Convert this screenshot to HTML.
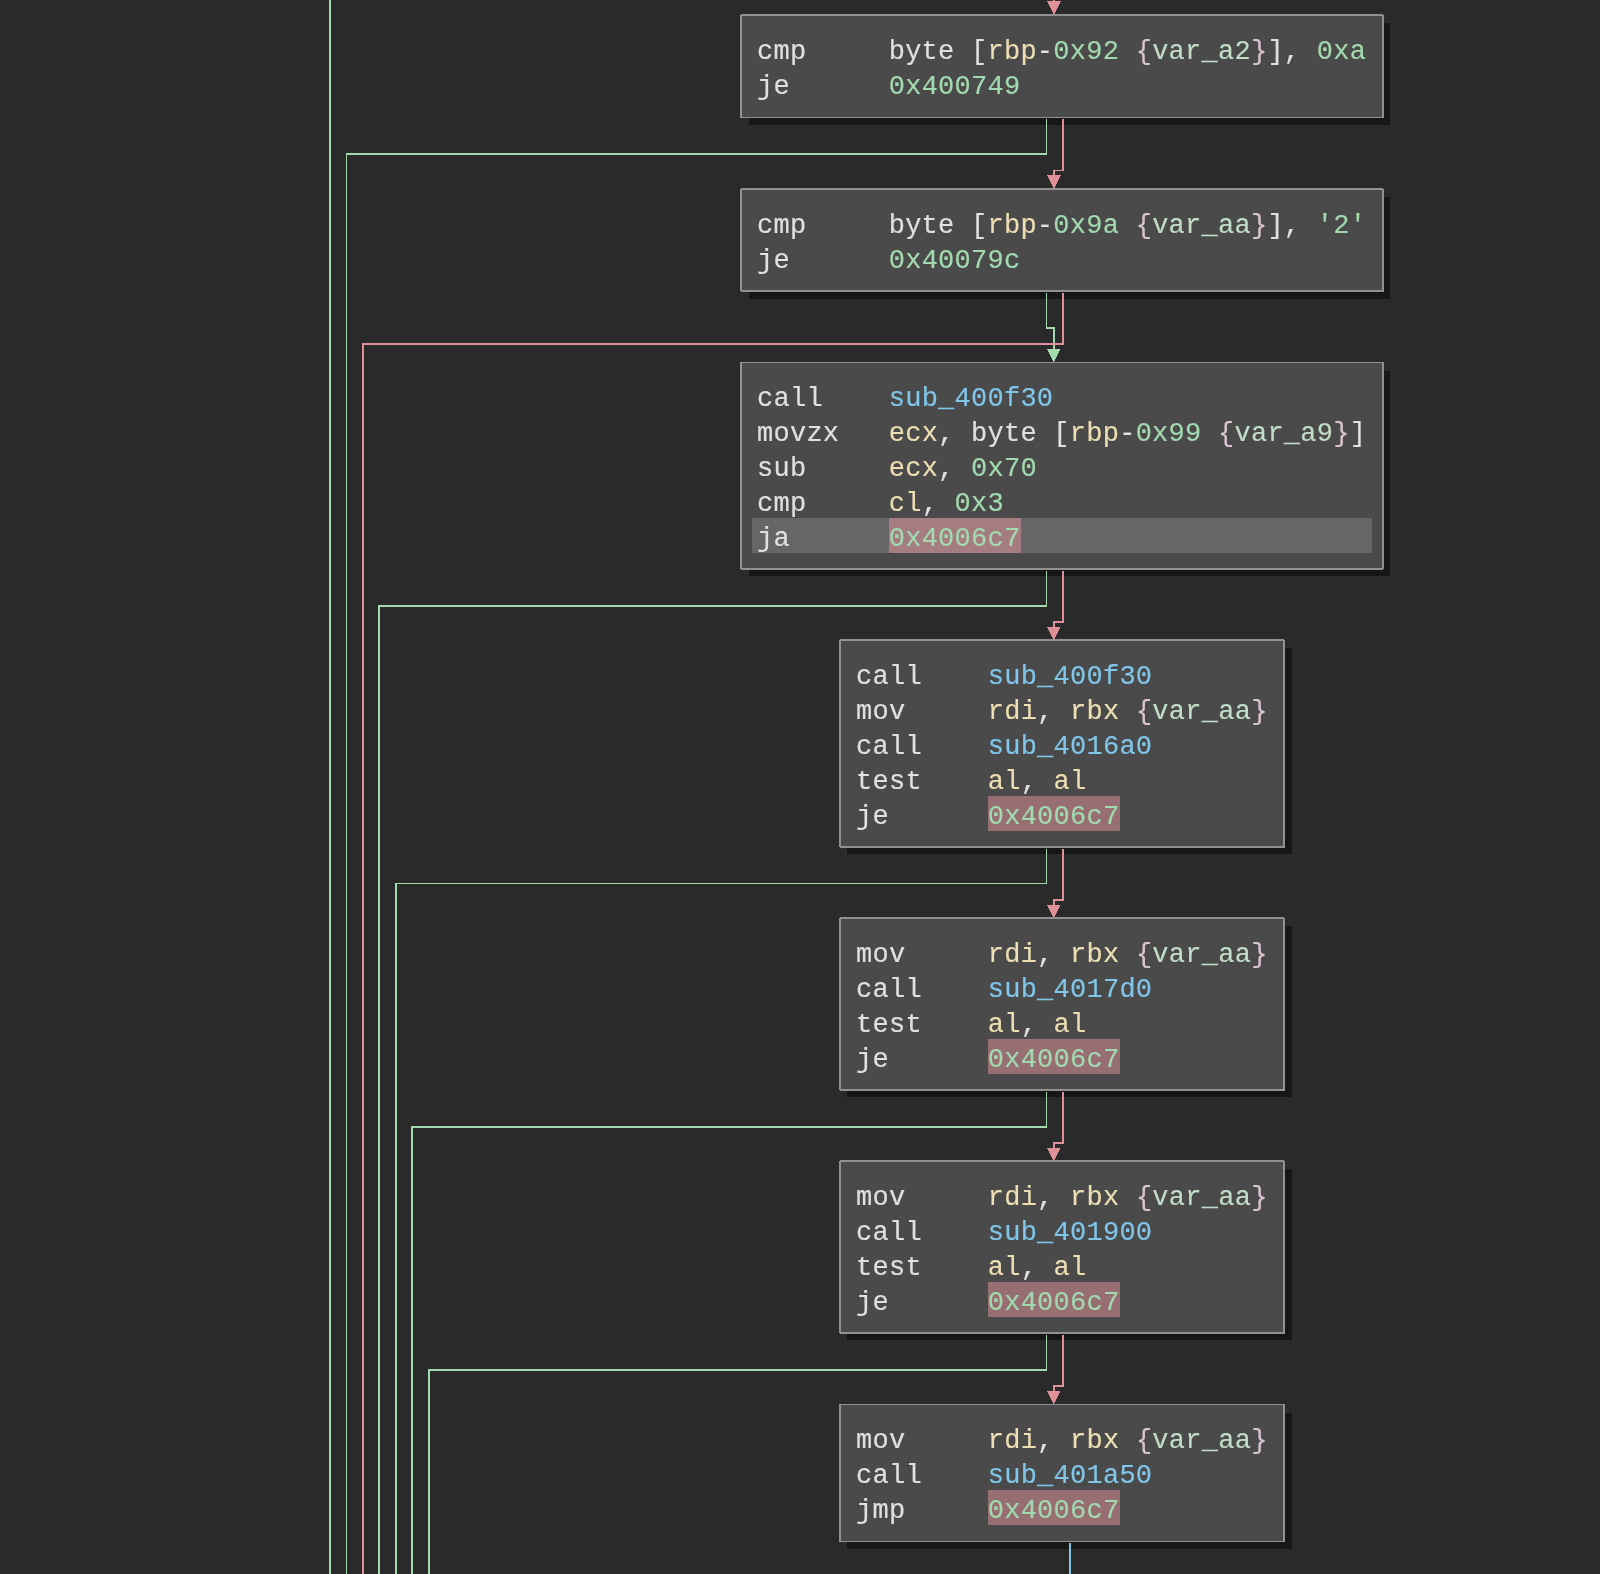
<!DOCTYPE html>
<html><head><meta charset="utf-8"><style>
html,body{margin:0;padding:0;background:#2a2a2a;width:1600px;height:1574px;overflow:hidden}
body{position:relative}
i{position:absolute;display:block}
.r{position:absolute;white-space:pre;font-family:"Liberation Mono",monospace;font-size:27px;line-height:35px;height:35px;color:#e0e0e0;will-change:transform;-webkit-text-stroke:0.15px currentColor;letter-spacing:0.2588px}
</style></head><body>
<i style="left:749px;top:23px;width:641px;height:102px;background:#161616"></i>
<i style="left:749px;top:197px;width:641px;height:102px;background:#161616"></i>
<i style="left:749px;top:371px;width:641px;height:205px;background:#161616"></i>
<i style="left:847px;top:648px;width:445px;height:206px;background:#161616"></i>
<i style="left:847px;top:926px;width:445px;height:171px;background:#161616"></i>
<i style="left:847px;top:1169px;width:445px;height:171px;background:#161616"></i>
<i style="left:847px;top:1413px;width:445px;height:136px;background:#161616"></i>
<svg style="position:absolute;left:0;top:0" width="1600" height="1574" shape-rendering="crispEdges"><rect x="329" y="0" width="2" height="1574" fill="#a2d9af"/><rect x="1053" y="0" width="2" height="1" fill="#de8f97"/><rect x="1047" y="1" width="14" height="1" fill="#de8f97"/><rect x="1048" y="2" width="12" height="1" fill="#de8f97"/><rect x="1048" y="3" width="12" height="1" fill="#de8f97"/><rect x="1049" y="4" width="10" height="1" fill="#de8f97"/><rect x="1049" y="5" width="10" height="1" fill="#de8f97"/><rect x="1050" y="6" width="8" height="1" fill="#de8f97"/><rect x="1050" y="7" width="8" height="1" fill="#de8f97"/><rect x="1051" y="8" width="6" height="1" fill="#de8f97"/><rect x="1051" y="9" width="6" height="1" fill="#de8f97"/><rect x="1052" y="10" width="4" height="1" fill="#de8f97"/><rect x="1052" y="11" width="4" height="1" fill="#de8f97"/><rect x="1053" y="12" width="2" height="1" fill="#de8f97"/><rect x="1053" y="13" width="2" height="1" fill="#de8f97"/><rect x="1046" y="119" width="1" height="36" fill="#a2d9af"/><rect x="346" y="153" width="701" height="2" fill="#a2d9af"/><rect x="346" y="153" width="1" height="1421" fill="#a2d9af"/><rect x="1062" y="119" width="2" height="52" fill="#de8f97"/><rect x="1053" y="170" width="11" height="1" fill="#de8f97"/><rect x="1053" y="170" width="2" height="5" fill="#de8f97"/><rect x="1047" y="175" width="14" height="1" fill="#de8f97"/><rect x="1048" y="176" width="12" height="1" fill="#de8f97"/><rect x="1048" y="177" width="12" height="1" fill="#de8f97"/><rect x="1049" y="178" width="10" height="1" fill="#de8f97"/><rect x="1049" y="179" width="10" height="1" fill="#de8f97"/><rect x="1050" y="180" width="8" height="1" fill="#de8f97"/><rect x="1050" y="181" width="8" height="1" fill="#de8f97"/><rect x="1051" y="182" width="6" height="1" fill="#de8f97"/><rect x="1051" y="183" width="6" height="1" fill="#de8f97"/><rect x="1052" y="184" width="4" height="1" fill="#de8f97"/><rect x="1052" y="185" width="4" height="1" fill="#de8f97"/><rect x="1053" y="186" width="2" height="1" fill="#de8f97"/><rect x="1053" y="187" width="2" height="1" fill="#de8f97"/><rect x="1046" y="293" width="1" height="36" fill="#a2d9af"/><rect x="1046" y="327" width="9" height="2" fill="#a2d9af"/><rect x="1053" y="327" width="2" height="22" fill="#a2d9af"/><rect x="1047" y="349" width="13" height="1" fill="#a2d9af"/><rect x="1048" y="350" width="12" height="1" fill="#a2d9af"/><rect x="1048" y="351" width="11" height="1" fill="#a2d9af"/><rect x="1049" y="352" width="10" height="1" fill="#a2d9af"/><rect x="1049" y="353" width="9" height="1" fill="#a2d9af"/><rect x="1050" y="354" width="8" height="1" fill="#a2d9af"/><rect x="1050" y="355" width="7" height="1" fill="#a2d9af"/><rect x="1051" y="356" width="6" height="1" fill="#a2d9af"/><rect x="1051" y="357" width="5" height="1" fill="#a2d9af"/><rect x="1052" y="358" width="4" height="1" fill="#a2d9af"/><rect x="1052" y="359" width="3" height="1" fill="#a2d9af"/><rect x="1053" y="360" width="2" height="1" fill="#a2d9af"/><rect x="1053" y="361" width="1" height="1" fill="#a2d9af"/><rect x="1062" y="293" width="2" height="52" fill="#de8f97"/><rect x="362" y="343" width="702" height="2" fill="#de8f97"/><rect x="362" y="343" width="2" height="1231" fill="#de8f97"/><rect x="1046" y="571" width="1" height="36" fill="#a2d9af"/><rect x="378" y="605" width="669" height="2" fill="#a2d9af"/><rect x="378" y="605" width="2" height="969" fill="#a2d9af"/><rect x="1062" y="571" width="2" height="52" fill="#de8f97"/><rect x="1053" y="621" width="11" height="2" fill="#de8f97"/><rect x="1053" y="621" width="2" height="6" fill="#de8f97"/><rect x="1047" y="627" width="13" height="1" fill="#de8f97"/><rect x="1048" y="628" width="12" height="1" fill="#de8f97"/><rect x="1048" y="629" width="11" height="1" fill="#de8f97"/><rect x="1049" y="630" width="10" height="1" fill="#de8f97"/><rect x="1049" y="631" width="9" height="1" fill="#de8f97"/><rect x="1050" y="632" width="8" height="1" fill="#de8f97"/><rect x="1050" y="633" width="7" height="1" fill="#de8f97"/><rect x="1051" y="634" width="6" height="1" fill="#de8f97"/><rect x="1051" y="635" width="5" height="1" fill="#de8f97"/><rect x="1052" y="636" width="4" height="1" fill="#de8f97"/><rect x="1052" y="637" width="3" height="1" fill="#de8f97"/><rect x="1053" y="638" width="2" height="1" fill="#de8f97"/><rect x="1053" y="639" width="1" height="1" fill="#de8f97"/><rect x="1046" y="849" width="1" height="35" fill="#a2d9af"/><rect x="395" y="883" width="652" height="1" fill="#a2d9af"/><rect x="395" y="883" width="2" height="691" fill="#a2d9af"/><rect x="1062" y="849" width="2" height="52" fill="#de8f97"/><rect x="1053" y="899" width="11" height="2" fill="#de8f97"/><rect x="1053" y="899" width="2" height="6" fill="#de8f97"/><rect x="1047" y="905" width="13" height="1" fill="#de8f97"/><rect x="1048" y="906" width="12" height="1" fill="#de8f97"/><rect x="1048" y="907" width="11" height="1" fill="#de8f97"/><rect x="1049" y="908" width="10" height="1" fill="#de8f97"/><rect x="1049" y="909" width="9" height="1" fill="#de8f97"/><rect x="1050" y="910" width="8" height="1" fill="#de8f97"/><rect x="1050" y="911" width="7" height="1" fill="#de8f97"/><rect x="1051" y="912" width="6" height="1" fill="#de8f97"/><rect x="1051" y="913" width="5" height="1" fill="#de8f97"/><rect x="1052" y="914" width="4" height="1" fill="#de8f97"/><rect x="1052" y="915" width="3" height="1" fill="#de8f97"/><rect x="1053" y="916" width="2" height="1" fill="#de8f97"/><rect x="1053" y="917" width="1" height="1" fill="#de8f97"/><rect x="1046" y="1092" width="1" height="36" fill="#a2d9af"/><rect x="411" y="1126" width="636" height="2" fill="#a2d9af"/><rect x="411" y="1126" width="2" height="448" fill="#a2d9af"/><rect x="1062" y="1092" width="2" height="52" fill="#de8f97"/><rect x="1053" y="1142" width="11" height="2" fill="#de8f97"/><rect x="1053" y="1142" width="2" height="6" fill="#de8f97"/><rect x="1047" y="1148" width="13" height="1" fill="#de8f97"/><rect x="1048" y="1149" width="12" height="1" fill="#de8f97"/><rect x="1048" y="1150" width="11" height="1" fill="#de8f97"/><rect x="1049" y="1151" width="10" height="1" fill="#de8f97"/><rect x="1049" y="1152" width="9" height="1" fill="#de8f97"/><rect x="1050" y="1153" width="8" height="1" fill="#de8f97"/><rect x="1050" y="1154" width="7" height="1" fill="#de8f97"/><rect x="1051" y="1155" width="6" height="1" fill="#de8f97"/><rect x="1051" y="1156" width="5" height="1" fill="#de8f97"/><rect x="1052" y="1157" width="4" height="1" fill="#de8f97"/><rect x="1052" y="1158" width="3" height="1" fill="#de8f97"/><rect x="1053" y="1159" width="2" height="1" fill="#de8f97"/><rect x="1053" y="1160" width="1" height="1" fill="#de8f97"/><rect x="1046" y="1335" width="1" height="36" fill="#a2d9af"/><rect x="428" y="1369" width="619" height="2" fill="#a2d9af"/><rect x="428" y="1369" width="2" height="205" fill="#a2d9af"/><rect x="1062" y="1335" width="2" height="52" fill="#de8f97"/><rect x="1053" y="1385" width="11" height="2" fill="#de8f97"/><rect x="1053" y="1385" width="2" height="6" fill="#de8f97"/><rect x="1047" y="1391" width="13" height="1" fill="#de8f97"/><rect x="1048" y="1392" width="12" height="1" fill="#de8f97"/><rect x="1048" y="1393" width="11" height="1" fill="#de8f97"/><rect x="1049" y="1394" width="10" height="1" fill="#de8f97"/><rect x="1049" y="1395" width="9" height="1" fill="#de8f97"/><rect x="1050" y="1396" width="8" height="1" fill="#de8f97"/><rect x="1050" y="1397" width="7" height="1" fill="#de8f97"/><rect x="1051" y="1398" width="6" height="1" fill="#de8f97"/><rect x="1051" y="1399" width="5" height="1" fill="#de8f97"/><rect x="1052" y="1400" width="4" height="1" fill="#de8f97"/><rect x="1052" y="1401" width="3" height="1" fill="#de8f97"/><rect x="1053" y="1402" width="2" height="1" fill="#de8f97"/><rect x="1053" y="1403" width="1" height="1" fill="#de8f97"/><rect x="1069" y="1543" width="2" height="31" fill="#80c6e9"/></svg>
<i style="left:740px;top:14px;width:644px;height:104px;background:#919191"></i>
<i style="left:742px;top:16px;width:640px;height:101px;background:#4a4a4a"></i>
<i style="left:740px;top:14px;width:1px;height:1px;background:#2a2a2a"></i>
<i style="left:1383px;top:14px;width:1px;height:1px;background:#2a2a2a"></i>
<div class="r" style="left:757px;top:35.0px">cmp     byte [<span style="color:#eddfb3">rbp</span>-<span style="color:#a2d9af">0x92</span> <span style="color:#dac4d1">{</span><span style="color:#c1dcc7">var_a2</span><span style="color:#dac4d1">}</span>], <span style="color:#a2d9af">0xa</span></div>
<div class="r" style="left:757px;top:70.0px">je      <span style="color:#a2d9af">0x400749</span></div>
<i style="left:740px;top:188px;width:644px;height:104px;background:#919191"></i>
<i style="left:742px;top:190px;width:640px;height:100px;background:#4a4a4a"></i>
<i style="left:740px;top:188px;width:1px;height:1px;background:#2a2a2a"></i>
<i style="left:1383px;top:188px;width:1px;height:1px;background:#2a2a2a"></i>
<i style="left:740px;top:291px;width:1px;height:1px;background:#2a2a2a"></i>
<div class="r" style="left:757px;top:209.0px">cmp     byte [<span style="color:#eddfb3">rbp</span>-<span style="color:#a2d9af">0x9a</span> <span style="color:#dac4d1">{</span><span style="color:#c1dcc7">var_aa</span><span style="color:#dac4d1">}</span>], <span style="color:#a2d9af">&#x27;2&#x27;</span></div>
<div class="r" style="left:757px;top:244.0px">je      <span style="color:#a2d9af">0x40079c</span></div>
<i style="left:740px;top:362px;width:644px;height:208px;background:#919191"></i>
<i style="left:742px;top:363px;width:640px;height:205px;background:#4a4a4a"></i>
<i style="left:740px;top:569px;width:1px;height:1px;background:#2a2a2a"></i>
<i style="left:1383px;top:569px;width:1px;height:1px;background:#161616"></i>
<div class="r" style="left:757px;top:382.0px">call    <span style="color:#80c6e9">sub_400f30</span></div>
<div class="r" style="left:757px;top:417.0px">movzx   <span style="color:#eddfb3">ecx</span>, byte [<span style="color:#eddfb3">rbp</span>-<span style="color:#a2d9af">0x99</span> <span style="color:#dac4d1">{</span><span style="color:#c1dcc7">var_a9</span><span style="color:#dac4d1">}</span>]</div>
<div class="r" style="left:757px;top:452.0px">sub     <span style="color:#eddfb3">ecx</span>, <span style="color:#a2d9af">0x70</span></div>
<div class="r" style="left:757px;top:487.0px">cmp     <span style="color:#eddfb3">cl</span>, <span style="color:#a2d9af">0x3</span></div>
<i style="left:752px;top:518px;width:620px;height:35px;background:#666666"></i>
<i style="left:889px;top:518px;width:132px;height:35px;background:rgba(222,143,151,0.52)"></i>
<div class="r" style="left:757px;top:522.0px">ja      <span style="color:#a2d9af">0x4006c7</span></div>
<i style="left:839px;top:639px;width:446px;height:209px;background:#919191"></i>
<i style="left:841px;top:641px;width:442px;height:205px;background:#4a4a4a"></i>
<i style="left:839px;top:639px;width:1px;height:1px;background:#2a2a2a"></i>
<i style="left:1284px;top:639px;width:1px;height:1px;background:#2a2a2a"></i>
<i style="left:839px;top:847px;width:1px;height:1px;background:#2a2a2a"></i>
<div class="r" style="left:856px;top:660.0px">call    <span style="color:#80c6e9">sub_400f30</span></div>
<div class="r" style="left:856px;top:695.0px">mov     <span style="color:#eddfb3">rdi</span>, <span style="color:#eddfb3">rbx</span> <span style="color:#dac4d1">{</span><span style="color:#c1dcc7">var_aa</span><span style="color:#dac4d1">}</span></div>
<div class="r" style="left:856px;top:730.0px">call    <span style="color:#80c6e9">sub_4016a0</span></div>
<div class="r" style="left:856px;top:765.0px">test    <span style="color:#eddfb3">al</span>, <span style="color:#eddfb3">al</span></div>
<i style="left:988px;top:796px;width:132px;height:35px;background:rgba(222,143,151,0.52)"></i>
<div class="r" style="left:856px;top:800.0px">je      <span style="color:#a2d9af">0x4006c7</span></div>
<i style="left:839px;top:917px;width:446px;height:174px;background:#919191"></i>
<i style="left:841px;top:919px;width:442px;height:170px;background:#4a4a4a"></i>
<i style="left:839px;top:917px;width:1px;height:1px;background:#2a2a2a"></i>
<i style="left:1284px;top:917px;width:1px;height:1px;background:#2a2a2a"></i>
<i style="left:839px;top:1090px;width:1px;height:1px;background:#2a2a2a"></i>
<div class="r" style="left:856px;top:938.0px">mov     <span style="color:#eddfb3">rdi</span>, <span style="color:#eddfb3">rbx</span> <span style="color:#dac4d1">{</span><span style="color:#c1dcc7">var_aa</span><span style="color:#dac4d1">}</span></div>
<div class="r" style="left:856px;top:973.0px">call    <span style="color:#80c6e9">sub_4017d0</span></div>
<div class="r" style="left:856px;top:1008.0px">test    <span style="color:#eddfb3">al</span>, <span style="color:#eddfb3">al</span></div>
<i style="left:988px;top:1039px;width:132px;height:35px;background:rgba(222,143,151,0.52)"></i>
<div class="r" style="left:856px;top:1043.0px">je      <span style="color:#a2d9af">0x4006c7</span></div>
<i style="left:839px;top:1160px;width:446px;height:174px;background:#919191"></i>
<i style="left:841px;top:1162px;width:442px;height:170px;background:#4a4a4a"></i>
<i style="left:839px;top:1160px;width:1px;height:1px;background:#2a2a2a"></i>
<i style="left:1284px;top:1160px;width:1px;height:1px;background:#2a2a2a"></i>
<i style="left:839px;top:1333px;width:1px;height:1px;background:#2a2a2a"></i>
<div class="r" style="left:856px;top:1181.0px">mov     <span style="color:#eddfb3">rdi</span>, <span style="color:#eddfb3">rbx</span> <span style="color:#dac4d1">{</span><span style="color:#c1dcc7">var_aa</span><span style="color:#dac4d1">}</span></div>
<div class="r" style="left:856px;top:1216.0px">call    <span style="color:#80c6e9">sub_401900</span></div>
<div class="r" style="left:856px;top:1251.0px">test    <span style="color:#eddfb3">al</span>, <span style="color:#eddfb3">al</span></div>
<i style="left:988px;top:1282px;width:132px;height:35px;background:rgba(222,143,151,0.52)"></i>
<div class="r" style="left:856px;top:1286.0px">je      <span style="color:#a2d9af">0x4006c7</span></div>
<i style="left:839px;top:1404px;width:446px;height:138px;background:#919191"></i>
<i style="left:841px;top:1405px;width:442px;height:136px;background:#4a4a4a"></i>
<div class="r" style="left:856px;top:1424.0px">mov     <span style="color:#eddfb3">rdi</span>, <span style="color:#eddfb3">rbx</span> <span style="color:#dac4d1">{</span><span style="color:#c1dcc7">var_aa</span><span style="color:#dac4d1">}</span></div>
<div class="r" style="left:856px;top:1459.0px">call    <span style="color:#80c6e9">sub_401a50</span></div>
<i style="left:988px;top:1490px;width:132px;height:35px;background:rgba(222,143,151,0.52)"></i>
<div class="r" style="left:856px;top:1494.0px">jmp     <span style="color:#a2d9af">0x4006c7</span></div>
</body></html>
